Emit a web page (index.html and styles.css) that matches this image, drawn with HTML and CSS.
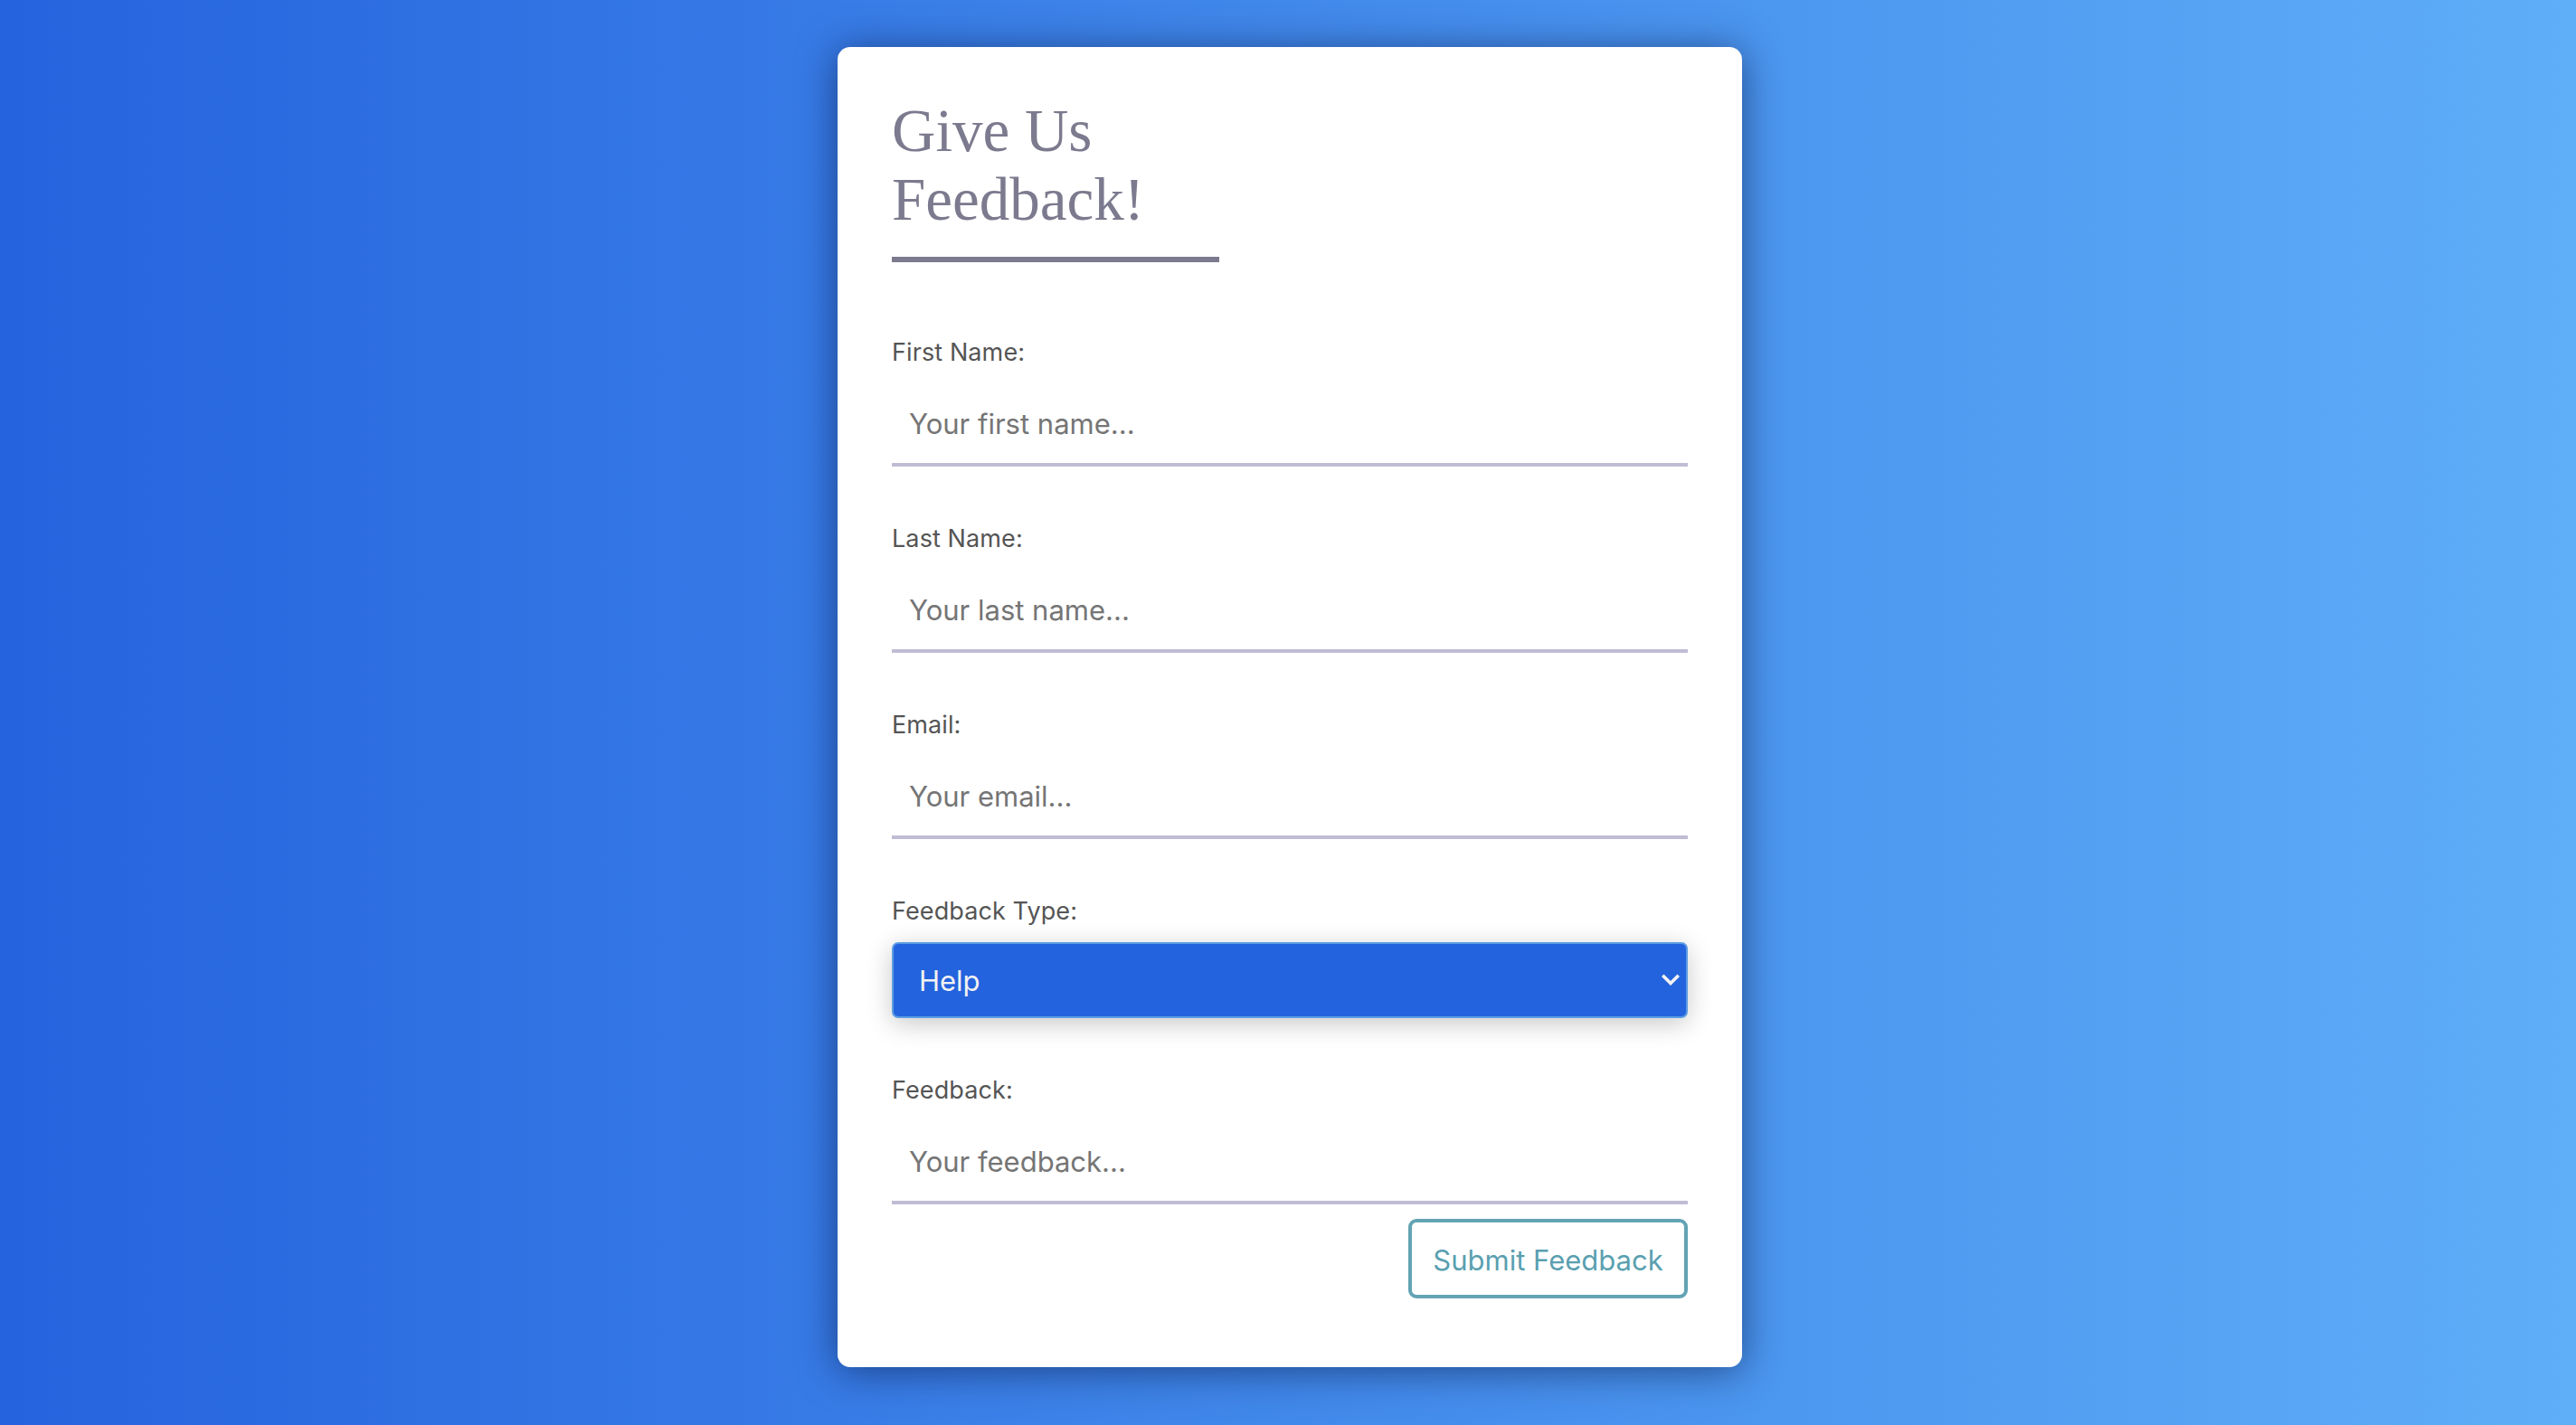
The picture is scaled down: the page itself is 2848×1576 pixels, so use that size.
FILE: index.html
```html
<!DOCTYPE html>
<html lang="en">
<head>
<meta charset="utf-8">
<title>Give Us Feedback!</title>
<link rel="stylesheet" href="styles.css">
</head>
<body>
<main class="page">
  <section class="card">
    <h1 class="title">Give Us Feedback!</h1>
    <form class="form">
      <div class="group">
        <label class="label" for="first">First Name:</label>
        <input class="field" id="first" type="text" placeholder="Your first name...">
      </div>
      <div class="group">
        <label class="label" for="last">Last Name:</label>
        <input class="field" id="last" type="text" placeholder="Your last name...">
      </div>
      <div class="group">
        <label class="label" for="email">Email:</label>
        <input class="field" id="email" type="email" placeholder="Your email...">
      </div>
      <div class="group">
        <label class="label" for="type">Feedback Type:</label>
        <div class="select-wrap">
          <select class="select" id="type">
            <option>Help</option>
            <option>Bug</option>
            <option>Suggestion</option>
          </select>
          <svg class="chevron" viewBox="0 0 20 14" width="20" height="14" aria-hidden="true">
            <path d="M2.5 3 L10 10.5 L17.5 3" fill="none" stroke="#f2f2f2" stroke-width="3.6" stroke-linecap="square" stroke-linejoin="miter"/>
          </svg>
        </div>
      </div>
      <div class="group last">
        <label class="label" for="fb">Feedback:</label>
        <input class="field" id="fb" type="text" placeholder="Your feedback...">
      </div>
      <div class="actions">
        <button class="submit" type="button">Submit Feedback</button>
      </div>
    </form>
  </section>
</main>
</body>
</html>
```

FILE: styles.css
```css
* {
  box-sizing: border-box;
}

html, body {
  margin: 0;
  height: 100%;
}

body {
  background: linear-gradient(to right, #2563de 0%, #5eaef8 100%);
  font-family: Inter, "Noto Sans", "Liberation Sans", sans-serif;
  min-height: 1576px;
}

.page {
  padding-top: 52px;
  padding-left: 4px;
  display: flex;
  justify-content: center;
}

.card {
  width: 1000px;
  background: #ffffff;
  border-radius: 14px;
  padding: 54px 60px 76px 60px;
  box-shadow: 0 4px 44px rgba(8, 25, 70, 0.6);
}

.title {
  margin: 0;
  width: 362px;
  font-family: "Liberation Serif", "Times New Roman", serif;
  font-weight: 400;
  font-size: 67px;
  line-height: 76px;
  color: #7b7a8e;
  padding-bottom: 26px;
  border-bottom: 6px solid #7b7a8e;
}

.form {
  margin-top: 81px;
  display: flex;
  flex-direction: column;
}

.group {
  display: flex;
  flex-direction: column;
  gap: 17px;
  margin-bottom: 61px;
}

.group.last {
  margin-bottom: 16px;
}

.label {
  font-size: 27px;
  line-height: 34px;
  padding-top: 2px;
  color: #555555;
  letter-spacing: 0.1px;
}

.field {
  display: block;
  width: 100%;
  border: none;
  border-bottom: 4px solid #bfbcd4;
  outline: none;
  background: transparent;
  font-family: Inter, "Noto Sans", "Liberation Sans", sans-serif;
  font-size: 31px;
  line-height: 40px;
  height: 92px;
  padding: 24px 19px;
  color: #333333;
}

.field::placeholder {
  color: #757575;
}

.select-wrap {
  position: relative;
}

.select {
  display: block;
  width: 100%;
  height: 84px;
  appearance: none;
  -webkit-appearance: none;
  background: #2463de;
  color: #f2f2f2;
  border: 2px solid #5c9de2;
  border-radius: 7px;
  padding: 0 28px;
  font-family: Inter, "Noto Sans", "Liberation Sans", sans-serif;
  font-size: 31px;
  box-shadow: 0 6px 28px rgba(0, 0, 0, 0.22);
  outline: none;
}

.chevron {
  position: absolute;
  right: 9px;
  top: 35px;
  pointer-events: none;
}

.actions {
  display: flex;
  justify-content: flex-end;
}

.submit {
  height: 88px;
  width: 309px;
  background: #ffffff;
  border: 4px solid #63a4b4;
  border-radius: 9px;
  color: #5a9fb0;
  font-family: Inter, "Noto Sans", "Liberation Sans", sans-serif;
  font-size: 31px;
  padding: 2px 0 0;
  cursor: pointer;
}
```
